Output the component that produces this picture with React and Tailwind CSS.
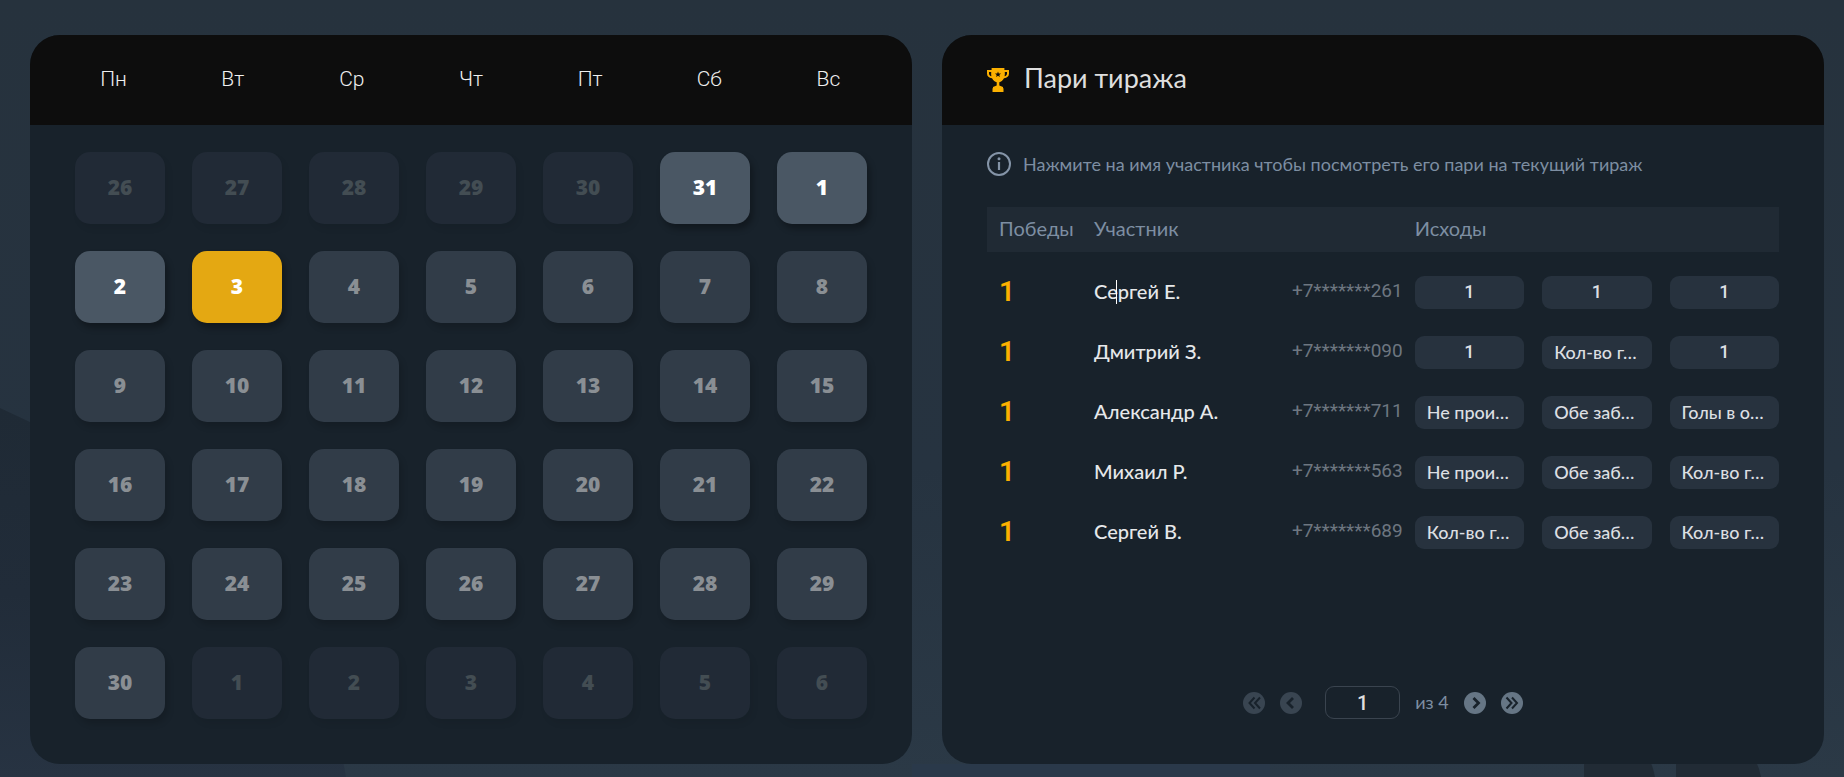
import React from "react";

const WEEKDAYS = ["Пн", "Вт", "Ср", "Чт", "Пт", "Сб", "Вс"];

const DAYS = [
  ...[26, 27, 28, 29, 30].map((day) => ({ day, kind: "outside" })),
  { day: 31, kind: "open" },
  { day: 1, kind: "open" },
  { day: 2, kind: "open" },
  { day: 3, kind: "current" },
  ...Array.from({ length: 27 }, (_, i) => ({ day: i + 4, kind: "future" })),
  ...[1, 2, 3, 4, 5, 6].map((day) => ({ day, kind: "outside" })),
];

const DAY_STYLES = {
  outside: "bg-[#212a36] text-[#434d53] shadow-[3px_5px_6px_rgba(0,0,0,0.06)]",
  open: "bg-[#4a5764] text-white shadow-[3px_5px_6px_rgba(0,0,0,0.3)]",
  current: "bg-[#e4a812] text-white shadow-[3px_5px_6px_rgba(0,0,0,0.3)]",
  future: "bg-[#313c48] text-[#8a8f94] shadow-[3px_5px_6px_rgba(0,0,0,0.15)]",
};

const ROWS = [
  { name: "Сергей Е.", phone: "+7*******261", bets: ["1", "1", "1"], caret: true },
  { name: "Дмитрий З.", phone: "+7*******090", bets: ["1", "Кол-во г…", "1"] },
  { name: "Александр А.", phone: "+7*******711", bets: ["Не прои…", "Обе заб…", "Голы в о…"] },
  { name: "Михаил Р.", phone: "+7*******563", bets: ["Не прои…", "Обе заб…", "Кол-во г…"] },
  { name: "Сергей В.", phone: "+7*******689", bets: ["Кол-во г…", "Обе заб…", "Кол-во г…"] },
];

function Backdrop() {
  return (
    <svg
      className="absolute inset-0 -z-10 h-full w-full"
      viewBox="0 0 1844 777"
      preserveAspectRatio="none"
      aria-hidden="true"
    >
      <defs>
        <linearGradient id="sky" x1="0" y1="0" x2="0" y2="1">
          <stop offset="0" stopColor="#26323d" />
          <stop offset="0.6" stopColor="#263340" />
          <stop offset="1" stopColor="#2b3946" />
        </linearGradient>
        <linearGradient id="hill" x1="0" y1="0" x2="0" y2="1">
          <stop offset="0" stopColor="#1f2a35" />
          <stop offset="0.5" stopColor="#212c39" />
          <stop offset="1" stopColor="#273342" />
        </linearGradient>
      </defs>
      <rect width="1844" height="777" fill="url(#sky)" />
      <rect x="912" y="764" width="358" height="13" fill="#2a394a" />
      <path d="M0 408 L30 422 L240 560 L343 760 L346 777 H0 Z" fill="url(#hill)" />
      <path d="M1584 777 V764 Q1590 740 1619 740 Q1648 740 1655 777 Z" fill="#212b35" />
      <path d="M1676 777 V758 Q1682 740 1718 740 Q1754 740 1761 777 Z" fill="#212b35" />
    </svg>
  );
}

function TrophyIcon() {
  return (
    <svg className="h-6 w-[22px] shrink-0" viewBox="0 0 22 24" aria-hidden="true">
      <path
        fill="#fbb000"
        fillRule="evenodd"
        d="M4.6 0H17.4V2H22V5.5C22 8.3 20 10 17 10.3C15.8 12.6 14 13.9 12.3 14.3V17.5L16 19V20.3H16.5V24H5.5V20.3H6V19L9.7 17.5V14.3C8 13.9 6.2 12.6 5 10.3C2 10 0 8.3 0 5.5V2H4.6Z M2 4V5.5C2 7 3 8 4.4 8.3C4.1 7 4.1 5.4 4.2 4Z M20 4H17.8C17.9 5.4 17.9 7 17.6 8.3C19 8 20 7 20 5.5Z M11 3.4L10.2 5.4L8 5.5L9.7 6.9L9.1 9L11 7.8L12.9 9L12.3 6.9L14 5.5L11.8 5.4Z"
      />
    </svg>
  );
}

function InfoIcon() {
  return (
    <svg className="size-6 shrink-0" viewBox="0 0 24 24" fill="none" aria-hidden="true">
      <circle cx="12" cy="12" r="11" stroke="#8494a7" strokeWidth="2" />
      <circle cx="12" cy="6.8" r="1.5" fill="#8494a7" />
      <path d="M12 10V18" stroke="#8494a7" strokeWidth="2.2" />
    </svg>
  );
}

const ARROWS = {
  first: "M11.5 5.5L6.5 11L11.5 16.5M17 5.5L12 11L17 16.5",
  prev: "M13 6L8 11L13 16",
  next: "M9.5 6L14.5 11L9.5 16",
  last: "M5.5 5.5L10.5 11L5.5 16.5M11 5.5L16 11L11 16.5",
};

function PageButton({ kind, label, disabled }) {
  const double = kind === "first" || kind === "last";
  return (
    <button
      type="button"
      aria-label={label}
      disabled={disabled}
      className={disabled ? "size-[22px] rounded-full bg-[#394551]" : "size-[22px] rounded-full bg-[#667685]"}
    >
      <svg viewBox="0 0 22 22" className="size-[22px]" fill="none" aria-hidden="true">
        <path d={ARROWS[kind]} stroke="#18222b" strokeWidth={double ? 2 : 2.8} />
      </svg>
    </button>
  );
}

function Calendar() {
  return (
    <section className="flex-1 overflow-hidden rounded-[30px] bg-[#18222b]">
      <div className="grid h-[90px] grid-cols-7 items-center bg-[#0d0d0d] px-6 text-center font-['Roboto',sans-serif] text-[21px] font-light text-[#f0f0f0]">
        {WEEKDAYS.map((day) => (
          <span key={day}>{day}</span>
        ))}
      </div>
      <div className="grid grid-cols-7 gap-[27px] px-[45px] pt-[27px] pb-[45px] font-['Open_Sans',sans-serif]">
        {DAYS.map(({ day, kind }, index) => (
          <button
            key={index}
            type="button"
            className={`h-[72px] rounded-[15px] text-[21px] font-extrabold ${DAY_STYLES[kind]}`}
          >
            {day}
          </button>
        ))}
      </div>
    </section>
  );
}

function Bets() {
  return (
    <section className="flex flex-1 flex-col overflow-hidden rounded-[30px] bg-[#18222b]">
      <header className="flex h-[90px] shrink-0 items-center gap-[15px] bg-[#0d0d0d] px-[45px]">
        <TrophyIcon />
        <h2 className="pb-1 text-[27px] text-[#dedede]">Пари тиража</h2>
      </header>
      <div className="flex flex-1 flex-col px-[45px] pt-6 pb-[45px]">
        <p className="flex h-[30px] items-center gap-3 text-[18px] text-[#7d8ea2]">
          <InfoIcon />
          Нажмите на имя участника чтобы посмотреть его пари на текущий тираж
        </p>
        <table className="mt-7 w-full table-fixed border-collapse">
          <colgroup>
            <col className="w-[12%]" />
            <col />
            <col className="w-[150px]" />
            <col className="w-[46%]" />
          </colgroup>
          <thead className="bg-[#202a34] text-left text-[20px] text-[#7d8ea2]">
            <tr className="h-[45px]">
              <th className="pb-1 pl-3 font-normal" scope="col">Победы</th>
              <th className="pb-1 pl-3 font-normal" scope="col" colSpan={2}>Участник</th>
              <th className="pb-1 font-normal" scope="col">Исходы</th>
            </tr>
          </thead>
          <tbody>
            <tr className="h-[10px]" aria-hidden="true" />
            {ROWS.map((row) => (
              <tr key={row.name} className="h-[60px]">
                <td className="pl-3 font-['Roboto',sans-serif] text-[28px] font-semibold text-[#fbb000]">1</td>
                <td className="pb-0.5 pl-3">
                  <button type="button" className="relative text-[20px] font-medium whitespace-nowrap text-[#e6e8ea]">
                    {row.name}
                    {row.caret && <span className="absolute top-1 left-[22px] h-6 w-px bg-white" />}
                  </button>
                </td>
                <td className="pr-3 pb-0.5 text-right font-['Roboto',sans-serif] text-[19px] text-[#6d7680]">
                  {row.phone}
                </td>
                <td>
                  <div className="grid grid-cols-3 gap-[18px] text-[18px] font-medium text-[#dcdfe2]">
                    {row.bets.map((bet, index) => (
                      <span
                        key={index}
                        className={`h-[33px] rounded-[9px] bg-[#27323e] px-3 leading-[32px] whitespace-nowrap ${
                          bet === "1" ? "text-center font-['Roboto',sans-serif]" : "text-left"
                        }`}
                      >
                        {bet}
                      </span>
                    ))}
                  </div>
                </td>
              </tr>
            ))}
          </tbody>
        </table>
        <nav className="mt-auto flex h-[33px] items-center justify-center gap-[15px]" aria-label="Страницы">
          <PageButton kind="first" label="Первая страница" disabled />
          <PageButton kind="prev" label="Предыдущая страница" disabled />
          <input
            aria-label="Номер страницы"
            defaultValue="1"
            className="ml-2 h-[33px] w-[75px] rounded-[9px] border border-[#3a444f] bg-transparent text-center font-['Roboto',sans-serif] text-[20px] font-medium text-[#dedede]"
          />
          <span className="text-[18px] text-[#7d8ea2]">из 4</span>
          <PageButton kind="next" label="Следующая страница" />
          <PageButton kind="last" label="Последняя страница" />
        </nav>
      </div>
    </section>
  );
}

export default function App() {
  return (
    <main className="relative isolate flex min-h-screen items-stretch gap-[30px] pt-[35px] pr-5 pb-[13px] pl-[30px] font-['Lato','Liberation_Sans',sans-serif]">
      <Backdrop />
      <Calendar />
      <Bets />
    </main>
  );
}
